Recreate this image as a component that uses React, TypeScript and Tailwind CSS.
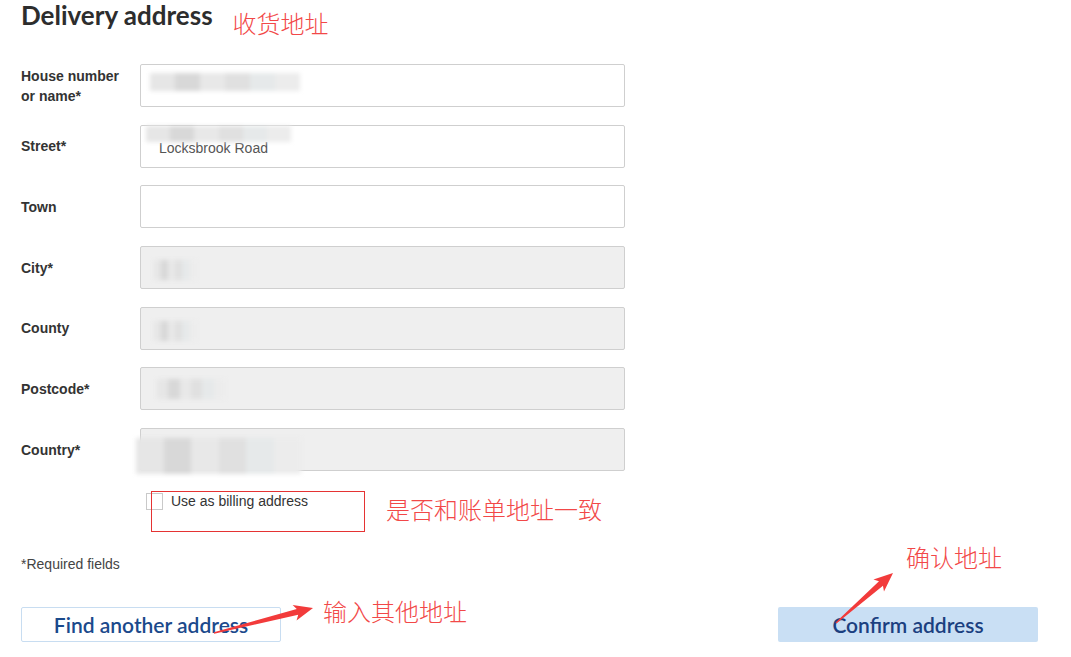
import React from 'react';

const labelFont = { fontFamily: '"Liberation Sans", Arial, sans-serif' };

interface FieldRowProps {
  label: React.ReactNode;
  grey?: boolean;
  children?: React.ReactNode;
}

const FieldRow: React.FC<FieldRowProps> = ({ label, grey, children }) => (
  <div className="flex items-center">
    <div className="w-[119px] shrink-0 text-[14px] font-bold leading-[20px] text-[#333]">{label}</div>
    <div
      className={`relative h-[43px] w-[485px] rounded-[2px] border border-[#cfcfcf] ${
        grey ? 'bg-[#efefef]' : 'bg-white'
      }`}
    >
      {children}
    </div>
  </div>
);

// pixelated / blurred masking like in the screenshot
const Mask: React.FC<{ className: string }> = ({ className }) => (
  <div className={`absolute flex blur-[2px] ${className}`}>
    <div className="flex-1 bg-[#e6e6e6]" />
    <div className="flex-1 bg-[#d8d8d8]" />
    <div className="flex-1 bg-[#e8e8e8]" />
    <div className="flex-1 bg-[#e0e0e0]" />
    <div className="flex-1 bg-[#e6e9ea]" />
    <div className="flex-1 bg-[#ececec]" />
  </div>
);

const Arrow: React.FC<{ x1: number; y1: number; x2: number; y2: number }> = ({ x1, y1, x2, y2 }) => {
  const dx = x2 - x1;
  const dy = y2 - y1;
  const len = Math.sqrt(dx * dx + dy * dy);
  const ux = dx / len;
  const uy = dy / len;
  const px = -uy;
  const py = ux;
  const headLen = 19;
  const bx = x2 - ux * headLen;
  const by = y2 - uy * headLen;
  const pts = [
    [x1 + px * 0.7, y1 + py * 0.7],
    [bx + ux * 3 + px * 3, by + uy * 3 + py * 3],
    [bx + px * 8, by + py * 8],
    [x2, y2],
    [bx - px * 8, by - py * 8],
    [bx + ux * 3 - px * 3, by + uy * 3 - py * 3],
    [x1 - px * 0.7, y1 - py * 0.7],
  ]
    .map((p) => p.join(','))
    .join(' ');
  return <polygon points={pts} fill="#f23b3b" />;
};

export default function App() {
  const cjk = { fontFamily: '"Noto Sans CJK SC", sans-serif' };
  return (
    <div className="relative h-[657px] w-[1071px] overflow-hidden bg-white pl-[21px]" style={labelFont}>
      {/* heading */}
      <div className="flex items-start">
        <h1
          className="text-[26px] font-bold leading-[30px] text-[#2d2d2d]"
          style={{ fontFamily: 'Lato, "Open Sans", sans-serif' }}
        >
          Delivery address
        </h1>
        <span className="ml-[20px] mt-[8px] text-[24px] font-light leading-[30px] text-[#f24848]" style={cjk}>
          收货地址
        </span>
      </div>

      {/* fields */}
      <div className="mt-[26px] flex flex-col gap-[17.7px]">
        <FieldRow
          label={
            <>
              House number
              <br />
              or name*
            </>
          }
        >
          <Mask className="left-[9px] top-[8px] h-[18px] w-[150px]" />
        </FieldRow>
        <FieldRow label="Street*">
          <div className="absolute left-[18px] top-[12px] text-[14px] text-[#555]">Locksbrook Road</div>
          <Mask className="left-[5px] top-[0px] h-[16px] w-[145px]" />
        </FieldRow>
        <FieldRow label="Town" />
        <FieldRow label="City*" grey>
          <Mask className="left-[13px] top-[13px] h-[20px] w-[42px]" />
        </FieldRow>
        <FieldRow label="County" grey>
          <Mask className="left-[13px] top-[13px] h-[20px] w-[42px]" />
        </FieldRow>
        <FieldRow label="Postcode*" grey>
          <Mask className="left-[16px] top-[11px] h-[20px] w-[68px]" />
        </FieldRow>
        <FieldRow label="Country*" grey>
          <div className="absolute left-[18px] top-[11px] text-[14px] text-[#a33]">U</div>
          <Mask className="-left-[5px] top-[9px] h-[36px] w-[165px]" />
        </FieldRow>
      </div>

      {/* billing checkbox */}
      <div className="relative ml-[125px] mt-[22px] flex items-start">
        <div className="h-[17px] w-[17px] border border-[#c9c9c9] bg-white" />
        <span className="ml-[8px] text-[14px] leading-[16px] text-[#333]">Use as billing address</span>
        <div className="absolute -top-[2px] left-[5px] h-[41px] w-[214px] border border-[#e53333]" />
        <span
          className="absolute left-[240px] top-[1px] whitespace-nowrap text-[24px] font-light leading-[30px] text-[#f24848]"
          style={cjk}
        >
          是否和账单地址一致
        </span>
      </div>

      <p className="mt-[46px] text-[14px] leading-[16px] text-[#444]">*Required fields</p>

      {/* buttons */}
      <div
        className="mt-[35px] flex w-[1017px] items-center justify-between"
        style={{ fontFamily: 'Lato, "Open Sans", sans-serif' }}
      >
        <button className="h-[35px] w-[260px] rounded-[2px] border border-[#c8ddf1] bg-white text-[21px] font-semibold text-[#1b4a8c]">
          Find another address
        </button>
        <button className="h-[35px] w-[260px] rounded-[2px] bg-[#c9dff4] text-[21px] font-semibold text-[#1b4080]">
          Confirm address
        </button>
      </div>

      {/* annotations */}
      <span
        className="absolute left-[323px] top-[596px] text-[24px] font-light leading-[30px] text-[#f24848]"
        style={cjk}
      >
        输入其他地址
      </span>
      <span
        className="absolute left-[906px] top-[542px] text-[24px] font-light leading-[30px] text-[#f24848]"
        style={cjk}
      >
        确认地址
      </span>
      <svg className="pointer-events-none absolute left-0 top-0" width="1071" height="657">
        <Arrow x1={214} y1={633} x2={313} y2={608} />
        <Arrow x1={836} y1={623} x2={893} y2={573} />
      </svg>
    </div>
  );
}
